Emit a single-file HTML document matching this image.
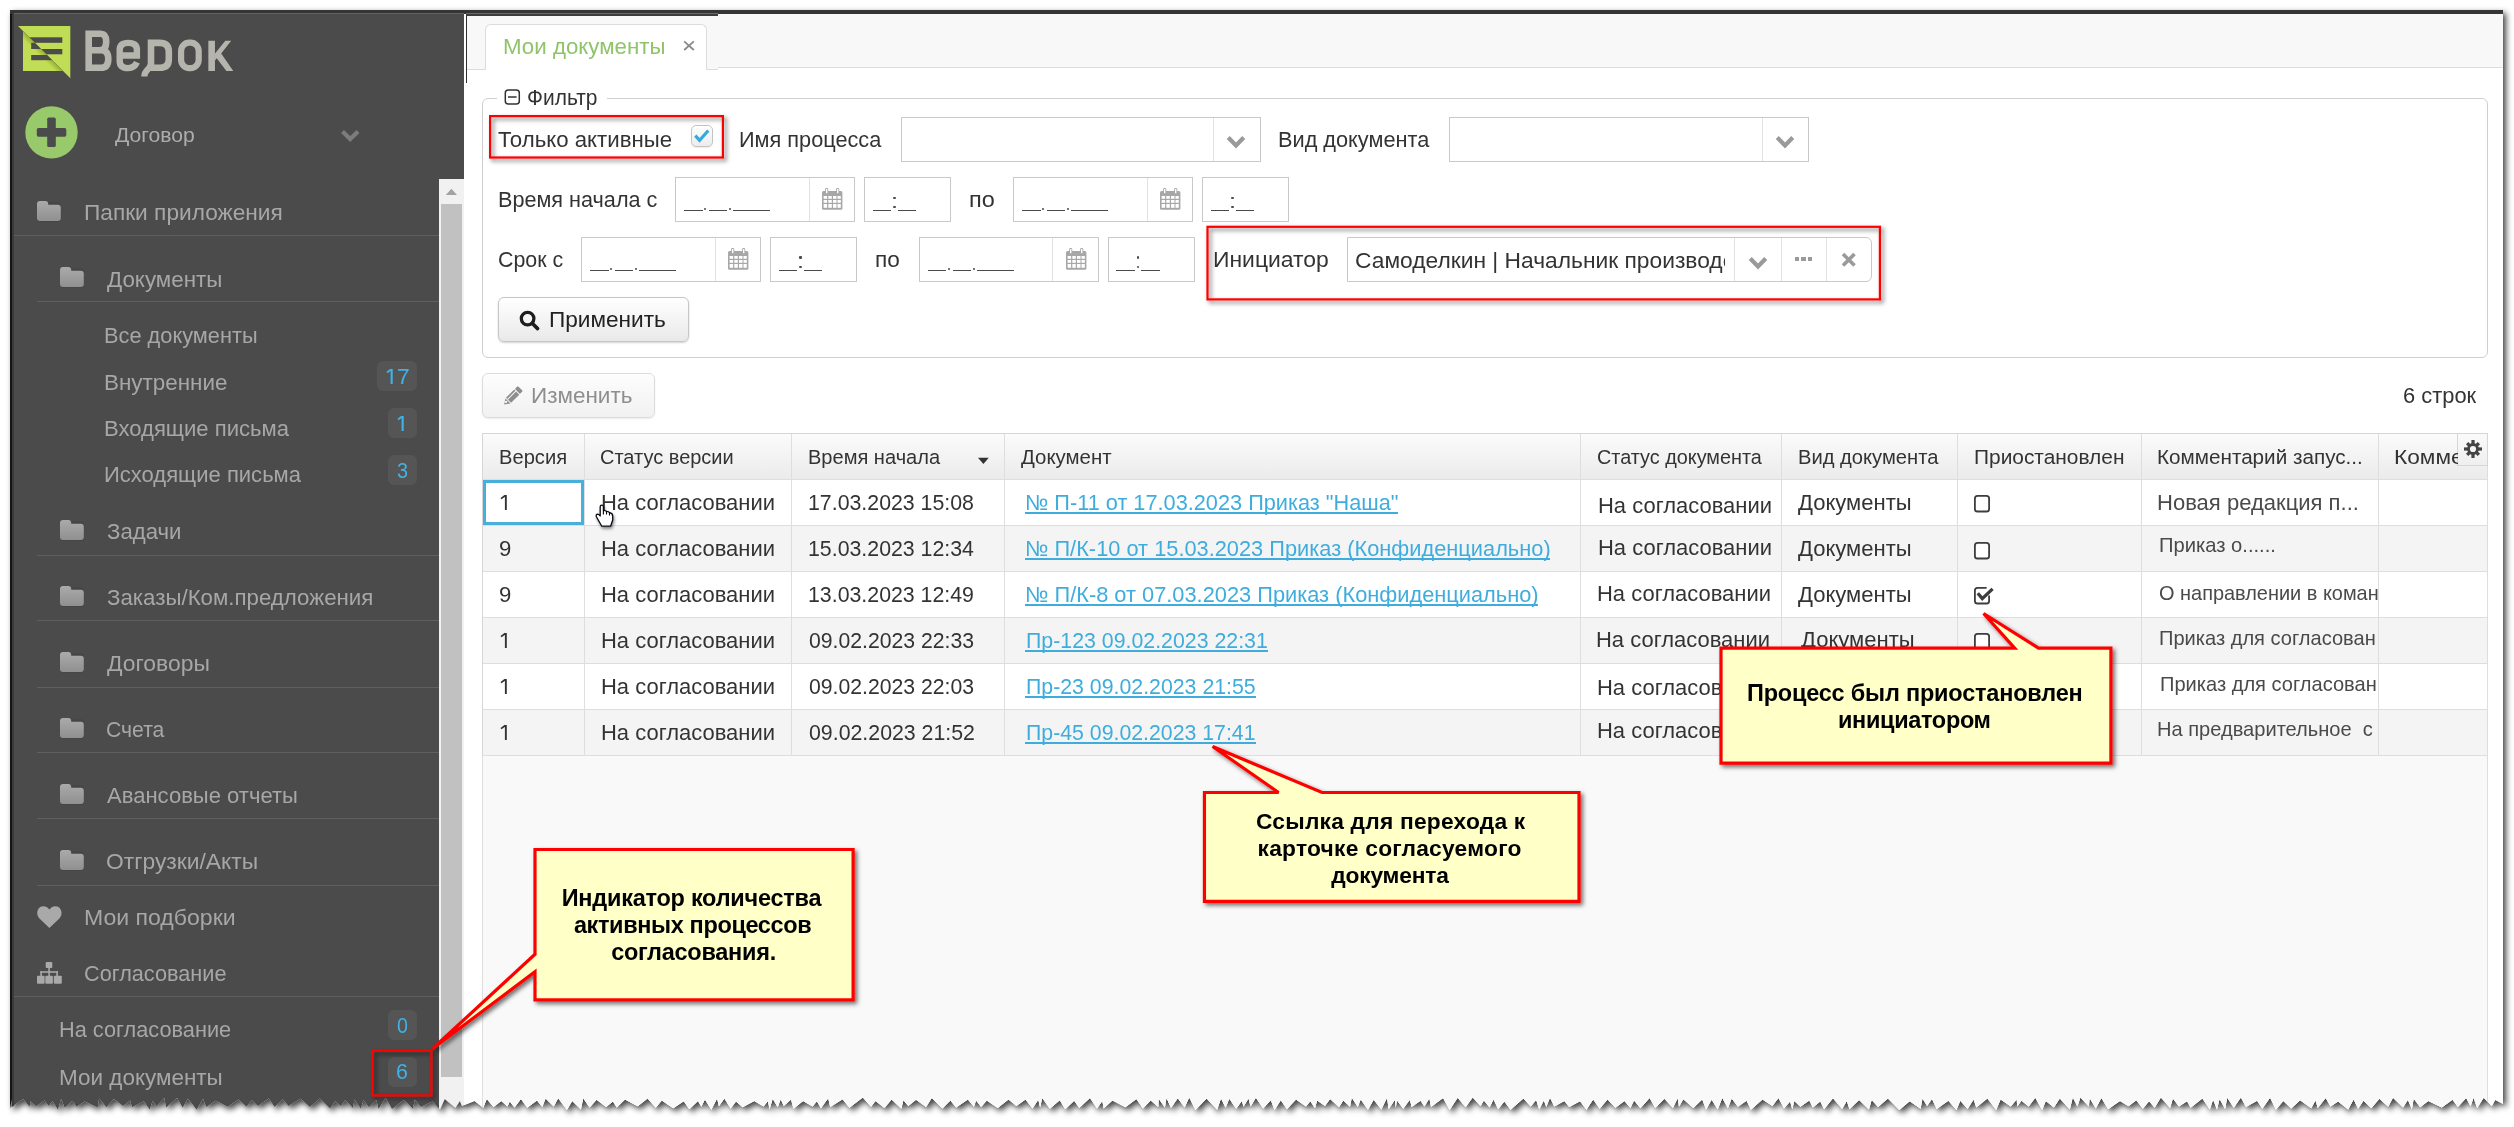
<!DOCTYPE html>
<html><head><meta charset="utf-8"><title>Мои документы</title>
<style>
html,body{margin:0;padding:0;background:#fff;}
body{width:2514px;height:1127px;position:relative;overflow:hidden;font-family:"Liberation Sans",sans-serif;}
.t{position:absolute;white-space:pre;}
#wrap{position:absolute;left:0;top:0;width:2514px;height:1127px;filter:drop-shadow(3.5px 3.5px 3px rgba(0,0,0,.75));}
#frame{position:absolute;left:0;top:0;width:2514px;height:1127px;clip-path:polygon(10.0px 10.0px,2503.0px 10.0px,2503.0px 1104.0px,2495.3px 1100.1px,2491.8px 1106.3px,2483.7px 1097.7px,2477.2px 1108.0px,2473.5px 1097.8px,2470.6px 1106.4px,2466.2px 1098.0px,2457.9px 1106.9px,2452.5px 1099.8px,2441.8px 1107.6px,2428.3px 1100.9px,2420.2px 1107.2px,2413.7px 1098.7px,2411.9px 1109.3px,2407.9px 1100.1px,2403.0px 1107.5px,2393.0px 1097.7px,2388.2px 1106.8px,2379.4px 1098.8px,2371.3px 1108.3px,2363.5px 1100.7px,2358.1px 1108.8px,2353.6px 1099.6px,2348.2px 1109.5px,2338.1px 1101.4px,2330.5px 1106.5px,2325.7px 1098.1px,2317.8px 1108.0px,2315.5px 1100.6px,2311.2px 1108.3px,2300.1px 1100.3px,2291.2px 1108.4px,2283.3px 1100.9px,2275.9px 1109.8px,2270.1px 1097.7px,2262.3px 1108.8px,2257.1px 1100.8px,2246.0px 1107.1px,2240.9px 1097.6px,2233.8px 1107.8px,2227.2px 1097.7px,2225.1px 1109.1px,2219.6px 1099.1px,2217.0px 1109.5px,2213.1px 1099.7px,2209.8px 1109.5px,2202.4px 1098.6px,2190.6px 1107.7px,2187.1px 1101.3px,2178.9px 1106.6px,2172.9px 1098.4px,2170.1px 1107.9px,2160.9px 1097.5px,2154.7px 1107.7px,2149.1px 1101.3px,2142.8px 1108.8px,2136.3px 1100.2px,2128.5px 1106.2px,2120.0px 1101.0px,2108.1px 1109.2px,2101.4px 1097.9px,2095.8px 1108.5px,2089.7px 1098.3px,2088.8px 1106.6px,2080.4px 1097.5px,2077.4px 1106.6px,2072.8px 1097.6px,2069.8px 1109.5px,2059.8px 1098.5px,2053.9px 1107.4px,2045.8px 1100.9px,2042.1px 1110.0px,2035.3px 1097.8px,2028.7px 1106.4px,2021.5px 1100.8px,2017.2px 1106.6px,2016.7px 1099.6px,2010.8px 1106.6px,2000.6px 1099.6px,1996.1px 1109.9px,1987.4px 1098.5px,1976.3px 1107.5px,1973.6px 1099.6px,1967.6px 1109.1px,1960.3px 1100.7px,1956.4px 1109.9px,1948.4px 1100.8px,1936.7px 1109.0px,1932.0px 1098.9px,1927.1px 1106.1px,1922.5px 1098.5px,1920.6px 1108.8px,1909.7px 1101.2px,1899.3px 1110.0px,1887.9px 1098.4px,1878.1px 1106.9px,1871.7px 1100.0px,1868.9px 1109.6px,1859.1px 1100.1px,1849.5px 1109.2px,1846.8px 1101.1px,1842.1px 1109.1px,1833.0px 1098.2px,1824.1px 1109.2px,1820.3px 1101.4px,1812.8px 1107.6px,1809.3px 1100.4px,1800.4px 1106.7px,1794.3px 1101.1px,1792.3px 1109.2px,1790.1px 1101.4px,1784.0px 1108.6px,1778.5px 1098.0px,1772.4px 1106.1px,1762.5px 1099.6px,1750.9px 1109.7px,1746.6px 1100.8px,1737.9px 1106.8px,1731.7px 1098.5px,1727.9px 1108.3px,1722.3px 1098.0px,1717.7px 1109.6px,1711.7px 1099.8px,1706.1px 1109.6px,1702.2px 1099.5px,1693.3px 1108.1px,1683.3px 1099.3px,1679.0px 1106.7px,1677.7px 1098.2px,1672.9px 1107.9px,1664.4px 1098.8px,1655.3px 1108.1px,1649.6px 1097.9px,1640.4px 1108.2px,1634.1px 1100.6px,1630.4px 1108.0px,1624.5px 1101.1px,1615.4px 1107.8px,1607.6px 1099.5px,1599.6px 1108.8px,1593.2px 1099.4px,1586.4px 1109.8px,1580.1px 1101.3px,1569.2px 1107.0px,1564.4px 1100.9px,1554.3px 1106.5px,1550.0px 1097.8px,1546.3px 1107.0px,1543.8px 1100.6px,1539.2px 1109.6px,1536.2px 1100.1px,1530.7px 1106.6px,1523.4px 1098.4px,1510.6px 1109.8px,1504.3px 1101.5px,1498.2px 1109.3px,1493.5px 1099.6px,1489.6px 1107.4px,1483.9px 1100.4px,1480.5px 1106.1px,1472.7px 1097.6px,1465.6px 1107.3px,1457.7px 1097.8px,1449.6px 1109.9px,1443.1px 1097.9px,1431.0px 1107.1px,1429.4px 1098.6px,1424.4px 1106.5px,1420.5px 1100.8px,1411.6px 1107.0px,1409.9px 1099.8px,1403.2px 1108.8px,1396.9px 1100.3px,1395.8px 1107.7px,1394.8px 1100.0px,1388.6px 1109.2px,1387.1px 1097.8px,1381.3px 1109.5px,1373.7px 1099.7px,1368.0px 1109.7px,1360.7px 1099.6px,1357.8px 1107.0px,1351.8px 1097.7px,1350.0px 1106.8px,1343.3px 1100.5px,1339.0px 1107.2px,1330.1px 1098.9px,1325.0px 1106.1px,1317.1px 1100.4px,1315.0px 1108.2px,1310.3px 1101.2px,1306.0px 1106.4px,1296.0px 1099.5px,1286.9px 1109.3px,1280.8px 1100.3px,1274.6px 1109.9px,1270.8px 1100.3px,1263.1px 1108.5px,1255.9px 1097.7px,1250.6px 1106.5px,1248.5px 1098.5px,1243.5px 1106.7px,1241.9px 1101.0px,1236.1px 1108.7px,1229.3px 1098.7px,1225.6px 1107.8px,1221.0px 1098.6px,1217.1px 1109.8px,1206.6px 1098.5px,1195.5px 1109.9px,1189.2px 1097.5px,1184.6px 1107.5px,1177.8px 1098.3px,1171.0px 1108.0px,1166.5px 1097.9px,1164.9px 1107.6px,1158.7px 1098.7px,1158.3px 1106.9px,1150.7px 1100.5px,1142.9px 1108.6px,1136.4px 1099.1px,1125.4px 1107.3px,1112.4px 1100.4px,1103.7px 1108.6px,1102.3px 1101.1px,1097.0px 1108.5px,1090.0px 1098.1px,1079.2px 1108.1px,1074.2px 1100.7px,1065.2px 1109.3px,1059.8px 1100.2px,1049.8px 1108.8px,1042.2px 1098.0px,1040.1px 1107.4px,1038.3px 1099.7px,1032.5px 1108.5px,1025.5px 1099.5px,1016.4px 1106.0px,1008.5px 1099.5px,997.7px 1108.1px,986.8px 1100.4px,981.1px 1107.0px,976.1px 1100.4px,973.9px 1106.8px,967.9px 1099.5px,956.1px 1107.5px,950.4px 1100.6px,942.4px 1108.5px,931.8px 1098.1px,926.1px 1107.0px,916.0px 1099.8px,908.3px 1106.0px,903.4px 1100.2px,901.3px 1108.8px,891.6px 1099.6px,884.5px 1107.9px,875.5px 1101.1px,871.0px 1106.8px,862.8px 1097.6px,849.4px 1107.8px,842.6px 1099.3px,830.2px 1107.1px,828.2px 1098.3px,820.9px 1108.3px,816.9px 1101.3px,812.6px 1106.5px,803.1px 1101.0px,793.5px 1108.8px,791.0px 1099.4px,783.8px 1106.1px,780.7px 1099.3px,777.7px 1107.2px,772.7px 1098.8px,769.5px 1109.4px,768.0px 1100.9px,763.5px 1106.5px,754.3px 1101.1px,742.6px 1107.2px,736.0px 1101.5px,730.7px 1108.4px,724.4px 1098.6px,718.9px 1106.2px,717.1px 1098.6px,711.3px 1109.7px,704.9px 1099.5px,701.3px 1106.8px,698.0px 1101.0px,689.3px 1109.2px,683.8px 1101.3px,673.2px 1108.2px,661.8px 1100.4px,655.7px 1107.8px,647.6px 1098.6px,637.7px 1106.2px,625.0px 1099.4px,616.8px 1107.4px,612.9px 1101.4px,606.1px 1107.0px,596.6px 1099.7px,589.6px 1107.6px,583.2px 1098.3px,580.9px 1109.6px,572.2px 1101.1px,566.9px 1110.0px,558.2px 1098.3px,553.7px 1106.4px,545.6px 1098.5px,542.3px 1107.0px,537.0px 1100.5px,527.2px 1107.7px,521.0px 1099.0px,514.5px 1107.4px,509.7px 1101.4px,507.5px 1106.5px,501.3px 1101.0px,493.5px 1106.9px,486.8px 1099.1px,483.2px 1107.8px,474.6px 1101.0px,461.9px 1106.1px,459.9px 1101.1px,455.4px 1107.9px,444.7px 1099.1px,440.0px 1109.7px,432.5px 1101.4px,420.8px 1107.0px,414.8px 1099.6px,413.0px 1108.7px,403.8px 1100.1px,392.0px 1109.1px,385.6px 1097.7px,378.6px 1109.1px,376.3px 1100.1px,368.9px 1107.2px,363.4px 1100.0px,360.9px 1108.8px,354.4px 1099.6px,353.1px 1108.3px,345.3px 1099.9px,340.9px 1106.0px,335.2px 1101.3px,330.1px 1108.6px,319.8px 1098.4px,309.9px 1107.0px,300.5px 1098.7px,288.5px 1106.1px,282.6px 1099.2px,274.6px 1107.0px,268.8px 1098.4px,257.9px 1106.1px,251.7px 1100.2px,246.5px 1106.8px,238.5px 1099.5px,227.7px 1106.8px,215.8px 1100.8px,206.2px 1106.9px,203.0px 1098.7px,196.7px 1109.8px,187.8px 1098.4px,182.7px 1107.7px,177.1px 1098.1px,166.1px 1107.6px,164.2px 1098.1px,156.7px 1106.2px,152.6px 1101.1px,149.7px 1109.5px,143.8px 1101.2px,132.0px 1107.3px,130.1px 1100.5px,123.0px 1106.1px,114.0px 1099.0px,106.4px 1107.3px,99.1px 1098.6px,97.7px 1107.4px,84.8px 1101.4px,76.4px 1106.8px,72.5px 1100.8px,64.7px 1107.7px,61.1px 1099.0px,57.9px 1109.7px,52.5px 1101.1px,48.8px 1106.1px,44.4px 1100.6px,36.2px 1106.2px,30.3px 1101.2px,29.7px 1107.0px,23.1px 1098.9px,11.7px 1107.1px,11.6px 1098.5px,10.0px 1108.9px,10.0px 1107.0px);}
</style></head><body>
<div id="wrap"><div id="frame">
<div style="position:absolute;left:10px;top:10px;width:2493px;height:1110px;background:#fff"></div>
<div style="position:absolute;left:10px;top:10px;width:454px;height:1110px;background:#4b4b4b"></div>
<div style="position:absolute;left:10px;top:10px;width:2px;height:1110px;background:#151515"></div>
<div style="position:absolute;left:12px;top:10px;width:2px;height:1110px;background:#3a3a3a"></div>
<div style="position:absolute;left:10px;top:10px;width:2493px;height:4px;background:#353535"></div>
<div style="position:absolute;left:14px;top:13px;width:450px;height:1px;background:#626262"></div>
<svg style="position:absolute;left:0;top:0" width="90" height="90" viewBox="0 0 90 90">
<defs>
 <clipPath id="lu"><polygon points="18,26 70.3,26 70.3,78.3"/></clipPath>
 <clipPath id="ll"><polygon points="23,31 63,71 23,71"/></clipPath>
 <linearGradient id="lg" x1="0" y1="1" x2="1" y2="0" gradientUnits="objectBoundingBox">
   <stop offset="0" stop-color="#c1dc55"/><stop offset="0.40" stop-color="#c1dc55"/><stop offset="0.5" stop-color="#98b032"/>
 </linearGradient>
</defs>
<polygon points="18,26 70.3,26 70.3,78.3" fill="#c1dc55"/>
<g clip-path="url(#lu)" fill="#4b4b4b"><rect x="29" y="37.3" width="33.3" height="5.5"/><rect x="31" y="49" width="31.3" height="5.3"/></g>
<polygon points="23,31 63,71 23,71" fill="url(#lg)"/>
<g clip-path="url(#ll)" fill="#4b4b4b"><rect x="31.2" y="42.8" width="31" height="6.2"/><rect x="31.2" y="55" width="31" height="5.2"/></g>
</svg>
<svg style="position:absolute;left:80px;top:24px" width="160" height="58" viewBox="80 24 160 58">
<g fill="none" stroke="#b5b5ad" stroke-width="6.6">
<path d="M88.7,30.4 V71.1 M88.7,33.7 H100.5 Q106.2,33.7 106.2,41.5 Q106.2,50.3 99.5,50.3 H88.7 M99,50.3 H101 Q108.3,50.3 108.3,59 Q108.3,67.8 101,67.8 H88.7"/>
<path d="M119.7,55.5 H136.9 V50 Q136.9,42.9 128.3,42.9 Q119.7,42.9 119.7,50 V61 Q119.7,68.1 128.3,68.1 Q134.5,68.1 136.9,62.3" stroke-width="6.4"/>
<path d="M151,39.6 V66 M151,42.9 H159.5 Q168.8,42.9 168.8,51.5 V59.5 Q168.8,67.8 159.5,67.8 H151"/>
<path d="M151,63.5 C151,69.5 144.3,69 144.3,76.6" stroke-width="6.2"/>
<rect x="181.1" y="42.7" width="17.6" height="25.5" rx="8" ry="8.5" stroke-width="6.2"/>
<path d="M211.65,40.7 V71.1"/>
</g>
<polygon points="215,53.6 225.3,40.7 231.2,40.7 221.2,53.5 233.3,71.1 226.4,71.1 216.7,58.3 215,60.5" fill="#b5b5ad"/>
</svg>
<svg style="position:absolute;left:20px;top:100px" width="65" height="65" viewBox="20 100 65 65">
<circle cx="51.5" cy="132.4" r="26.2" fill="#98c96b"/>
<rect x="36.8" y="128.1" width="29.5" height="8.6" rx="1.6" fill="#4b4b4b"/>
<rect x="47.2" y="117.6" width="8.6" height="29.5" rx="1.6" fill="#4b4b4b"/>
</svg>
<svg style="position:absolute;left:330px;top:120px" width="40" height="30" viewBox="330 120 40 30">
<polyline points="342.5,131.5 350.2,139 358,131.5" fill="none" stroke="#7c7c7c" stroke-width="4.2"/></svg>
<div style="position:absolute;left:14px;top:235px;width:424.5px;height:1px;background:#5f5f5f"></div>
<div style="position:absolute;left:37px;top:301px;width:401.5px;height:1px;background:#5f5f5f"></div>
<div style="position:absolute;left:37px;top:554.5px;width:401.5px;height:1.0px;background:#5f5f5f"></div>
<div style="position:absolute;left:37px;top:620.3px;width:401.5px;height:1.0px;background:#5f5f5f"></div>
<div style="position:absolute;left:37px;top:686.5px;width:401.5px;height:1.0px;background:#5f5f5f"></div>
<div style="position:absolute;left:37px;top:752px;width:401.5px;height:1px;background:#5f5f5f"></div>
<div style="position:absolute;left:37px;top:818.4px;width:401.5px;height:1.0px;background:#5f5f5f"></div>
<div style="position:absolute;left:37px;top:884.6px;width:401.5px;height:1.0px;background:#5f5f5f"></div>
<div style="position:absolute;left:14px;top:996px;width:424.5px;height:1px;background:#5f5f5f"></div>
<svg style="position:absolute;left:37.1px;top:201px;overflow:visible" width="24" height="21" viewBox="0 0 24 21">
<defs><linearGradient id="fg37_201" x1="0" y1="0" x2="0" y2="1"><stop offset="0" stop-color="#aaaaaa"/><stop offset="1" stop-color="#909090"/></linearGradient></defs>
<rect x="0.3" y="1" width="23.5" height="20" rx="3" fill="#3e3e3e" opacity="0.35"/>
<path d="M0,3 Q0,0 3,0 L8.3,0 Q11.2,0 11.2,3 L11.2,3.8 L20.8,3.8 Q23.8,3.8 23.8,6.8 L23.8,17 Q23.8,20 20.8,20 L3,20 Q0,20 0,17 Z" fill="url(#fg37_201)"/>
</svg>
<svg style="position:absolute;left:59.8px;top:267px;overflow:visible" width="24" height="21" viewBox="0 0 24 21">
<defs><linearGradient id="fg59_267" x1="0" y1="0" x2="0" y2="1"><stop offset="0" stop-color="#aaaaaa"/><stop offset="1" stop-color="#909090"/></linearGradient></defs>
<rect x="0.3" y="1" width="23.5" height="20" rx="3" fill="#3e3e3e" opacity="0.35"/>
<path d="M0,3 Q0,0 3,0 L8.3,0 Q11.2,0 11.2,3 L11.2,3.8 L20.8,3.8 Q23.8,3.8 23.8,6.8 L23.8,17 Q23.8,20 20.8,20 L3,20 Q0,20 0,17 Z" fill="url(#fg59_267)"/>
</svg>
<svg style="position:absolute;left:59.8px;top:520px;overflow:visible" width="24" height="21" viewBox="0 0 24 21">
<defs><linearGradient id="fg59_520" x1="0" y1="0" x2="0" y2="1"><stop offset="0" stop-color="#aaaaaa"/><stop offset="1" stop-color="#909090"/></linearGradient></defs>
<rect x="0.3" y="1" width="23.5" height="20" rx="3" fill="#3e3e3e" opacity="0.35"/>
<path d="M0,3 Q0,0 3,0 L8.3,0 Q11.2,0 11.2,3 L11.2,3.8 L20.8,3.8 Q23.8,3.8 23.8,6.8 L23.8,17 Q23.8,20 20.8,20 L3,20 Q0,20 0,17 Z" fill="url(#fg59_520)"/>
</svg>
<svg style="position:absolute;left:59.8px;top:586px;overflow:visible" width="24" height="21" viewBox="0 0 24 21">
<defs><linearGradient id="fg59_586" x1="0" y1="0" x2="0" y2="1"><stop offset="0" stop-color="#aaaaaa"/><stop offset="1" stop-color="#909090"/></linearGradient></defs>
<rect x="0.3" y="1" width="23.5" height="20" rx="3" fill="#3e3e3e" opacity="0.35"/>
<path d="M0,3 Q0,0 3,0 L8.3,0 Q11.2,0 11.2,3 L11.2,3.8 L20.8,3.8 Q23.8,3.8 23.8,6.8 L23.8,17 Q23.8,20 20.8,20 L3,20 Q0,20 0,17 Z" fill="url(#fg59_586)"/>
</svg>
<svg style="position:absolute;left:59.8px;top:652px;overflow:visible" width="24" height="21" viewBox="0 0 24 21">
<defs><linearGradient id="fg59_652" x1="0" y1="0" x2="0" y2="1"><stop offset="0" stop-color="#aaaaaa"/><stop offset="1" stop-color="#909090"/></linearGradient></defs>
<rect x="0.3" y="1" width="23.5" height="20" rx="3" fill="#3e3e3e" opacity="0.35"/>
<path d="M0,3 Q0,0 3,0 L8.3,0 Q11.2,0 11.2,3 L11.2,3.8 L20.8,3.8 Q23.8,3.8 23.8,6.8 L23.8,17 Q23.8,20 20.8,20 L3,20 Q0,20 0,17 Z" fill="url(#fg59_652)"/>
</svg>
<svg style="position:absolute;left:59.8px;top:718px;overflow:visible" width="24" height="21" viewBox="0 0 24 21">
<defs><linearGradient id="fg59_718" x1="0" y1="0" x2="0" y2="1"><stop offset="0" stop-color="#aaaaaa"/><stop offset="1" stop-color="#909090"/></linearGradient></defs>
<rect x="0.3" y="1" width="23.5" height="20" rx="3" fill="#3e3e3e" opacity="0.35"/>
<path d="M0,3 Q0,0 3,0 L8.3,0 Q11.2,0 11.2,3 L11.2,3.8 L20.8,3.8 Q23.8,3.8 23.8,6.8 L23.8,17 Q23.8,20 20.8,20 L3,20 Q0,20 0,17 Z" fill="url(#fg59_718)"/>
</svg>
<svg style="position:absolute;left:59.8px;top:784px;overflow:visible" width="24" height="21" viewBox="0 0 24 21">
<defs><linearGradient id="fg59_784" x1="0" y1="0" x2="0" y2="1"><stop offset="0" stop-color="#aaaaaa"/><stop offset="1" stop-color="#909090"/></linearGradient></defs>
<rect x="0.3" y="1" width="23.5" height="20" rx="3" fill="#3e3e3e" opacity="0.35"/>
<path d="M0,3 Q0,0 3,0 L8.3,0 Q11.2,0 11.2,3 L11.2,3.8 L20.8,3.8 Q23.8,3.8 23.8,6.8 L23.8,17 Q23.8,20 20.8,20 L3,20 Q0,20 0,17 Z" fill="url(#fg59_784)"/>
</svg>
<svg style="position:absolute;left:59.8px;top:850px;overflow:visible" width="24" height="21" viewBox="0 0 24 21">
<defs><linearGradient id="fg59_850" x1="0" y1="0" x2="0" y2="1"><stop offset="0" stop-color="#aaaaaa"/><stop offset="1" stop-color="#909090"/></linearGradient></defs>
<rect x="0.3" y="1" width="23.5" height="20" rx="3" fill="#3e3e3e" opacity="0.35"/>
<path d="M0,3 Q0,0 3,0 L8.3,0 Q11.2,0 11.2,3 L11.2,3.8 L20.8,3.8 Q23.8,3.8 23.8,6.8 L23.8,17 Q23.8,20 20.8,20 L3,20 Q0,20 0,17 Z" fill="url(#fg59_850)"/>
</svg>
<svg style="position:absolute;left:36px;top:904px" width="28" height="26" viewBox="36 904 28 26">
<path d="M49.4,928 L39.2,918.2 C35.5,914.3 37.2,906.2 43.3,906.2 C46.3,906.2 48.3,908 49.4,909.6 C50.5,908 52.5,906.2 55.5,906.2 C61.6,906.2 63.3,914.3 59.6,918.2 Z" fill="#a9a9a9"/></svg>
<svg style="position:absolute;left:36px;top:960px" width="28" height="26" viewBox="36 960 28 26" fill="#a9a9a9">
<rect x="45.7" y="962" width="6.6" height="6" rx="1"/>
<rect x="48.3" y="967" width="1.6" height="5"/>
<rect x="40.3" y="971.2" width="17.6" height="1.6"/>
<rect x="40.3" y="971.2" width="1.6" height="5"/><rect x="48.3" y="971.2" width="1.6" height="5"/><rect x="56.3" y="971.2" width="1.6" height="5"/>
<rect x="37" y="975.8" width="7.6" height="8" rx="1"/><rect x="45.3" y="975.8" width="7.6" height="8" rx="1"/><rect x="53.8" y="975.8" width="8" height="8" rx="1"/>
</svg>
<div style="position:absolute;left:377px;top:361px;width:39.80000000000001px;height:30px;background:#555555;border-radius:6px"></div>
<div style="position:absolute;left:388px;top:408.4px;width:28.80000000000001px;height:29.30000000000001px;background:#555555;border-radius:6px"></div>
<div style="position:absolute;left:388px;top:455px;width:28.80000000000001px;height:29.5px;background:#555555;border-radius:6px"></div>
<div style="position:absolute;left:388px;top:1010px;width:28.80000000000001px;height:29.59999999999991px;background:#555555;border-radius:6px"></div>
<div style="position:absolute;left:388px;top:1057.4px;width:28.80000000000001px;height:29.199999999999818px;background:#555555;border-radius:6px"></div>
<svg style="position:absolute;left:385.0px;top:368px;overflow:visible" width="9.7" height="17" viewBox="385.0 368 9.7 17"><rect x="390.6" y="369" width="2.1" height="15" fill="#3fb3e6"/><line x1="391.0" y1="369.5" x2="387.0" y2="372.6" stroke="#3fb3e6" stroke-width="1.8900000000000001"/></svg>
<svg style="position:absolute;left:396.4px;top:415px;overflow:visible" width="9.7" height="17" viewBox="396.4 415 9.7 17"><rect x="402.0" y="416" width="2.1" height="15" fill="#3fb3e6"/><line x1="402.4" y1="416.5" x2="398.4" y2="419.6" stroke="#3fb3e6" stroke-width="1.8900000000000001"/></svg>
<div style="position:absolute;left:438.5px;top:178.8px;width:25.5px;height:941.2px;background:#f1f1f1"></div>
<svg style="position:absolute;left:440px;top:180px" width="24" height="20" viewBox="440 180 24 20"><polygon points="445.8,195 451.4,188.7 457,195" fill="#a3a3a3"/></svg>
<div style="position:absolute;left:441px;top:204px;width:21px;height:872.8px;background:#c1c1c1"></div>
<div style="position:absolute;left:464px;top:14px;width:2039px;height:1106px;background:#fff"></div>
<div style="position:absolute;left:467px;top:14px;width:2036px;height:53.3px;background:#f8f8f8;border-bottom:1px solid #dcdcdc"></div>
<div style="position:absolute;left:467px;top:14px;width:251px;height:54.8px;background:#f8f8f8;border-bottom:1px solid #dcdcdc"></div>
<div style="position:absolute;left:466px;top:14px;width:1.3000000000000114px;height:68.5px;background:#2e2e2e"></div>
<div style="position:absolute;left:466px;top:14px;width:252px;height:1.5999999999999996px;background:#3c3c3c"></div>
<div style="position:absolute;left:466px;top:13px;width:252px;height:1px;background:#6a6a6a"></div>
<div style="position:absolute;left:484.5px;top:24.3px;width:222.79999999999995px;height:45.7px;background:#fff;border:1px solid #dcdcdc;border-bottom:none;border-radius:6px 6px 0 0;box-sizing:border-box"></div>
<svg style="position:absolute;left:680px;top:37px" width="18" height="17" viewBox="680 37 18 17"><path d="M684.2,41.3 L693.8,50 M693.8,41.3 L684.2,50" stroke="#8a8a8a" stroke-width="1.8"/></svg>
<div style="position:absolute;left:482px;top:98px;width:2006px;height:260px;border:1px solid #cfcfcf;border-radius:6px;box-sizing:border-box"></div>
<div style="position:absolute;left:497px;top:96px;width:110px;height:5px;background:#fff"></div>
<svg style="position:absolute;left:500px;top:86px" width="24" height="22" viewBox="500 86 24 22">
<rect x="505.3" y="89.9" width="14" height="14.2" rx="3" fill="none" stroke="#333" stroke-width="1.5"/>
<line x1="508" y1="97" x2="516.6" y2="97" stroke="#333" stroke-width="1.6"/></svg>
<div style="position:absolute;left:691px;top:125.4px;width:21.700000000000045px;height:21.900000000000006px;border:1px solid #c4c4c4;border-radius:5px;box-sizing:border-box;background:linear-gradient(#ffffff,#ececec);box-shadow:0 1px 1px rgba(0,0,0,.08)"></div>
<svg style="position:absolute;left:690px;top:124px" width="24" height="24" viewBox="690 124 24 24"><polyline points="695.3,135.6 699.6,140.3 708.3,130.5" fill="none" stroke="#36a9dd" stroke-width="3.2"/></svg>
<div style="position:absolute;left:901px;top:117px;width:360px;height:45px;border:1px solid #c9c9c9;box-sizing:border-box;background:#fff"></div>
<div style="position:absolute;left:1213px;top:118px;width:1px;height:43px;background:#e2e2e2"></div>
<svg style="position:absolute;left:1221.2px;top:130.2px" width="30" height="24" viewBox="1221.2 130.2 30 24"><polyline points="1228.45,137.7 1236.2,145.7 1243.95,137.7" fill="none" stroke="#9a9a9a" stroke-width="4.2"/></svg>
<div style="position:absolute;left:1449px;top:117px;width:360px;height:45px;border:1px solid #c9c9c9;box-sizing:border-box;background:#fff"></div>
<div style="position:absolute;left:1762px;top:118px;width:1px;height:43px;background:#e2e2e2"></div>
<svg style="position:absolute;left:1769.5px;top:130.2px" width="30" height="24" viewBox="1769.5 130.2 30 24"><polyline points="1776.75,137.7 1784.5,145.7 1792.25,137.7" fill="none" stroke="#9a9a9a" stroke-width="4.2"/></svg>
<div style="position:absolute;left:675px;top:177px;width:180px;height:45px;border:1px solid #c9c9c9;box-sizing:border-box;background:#fff"></div>
<div style="position:absolute;left:809px;top:178px;width:1px;height:43px;background:#e2e2e2"></div>
<svg style="position:absolute;left:821.6px;top:188px" width="21" height="22" viewBox="0 0 21 22">
<rect x="0" y="3" width="20.4" height="18.7" rx="1.5" fill="#a7a7a7"/>
<rect x="3.2" y="0" width="3" height="6" rx="1.2" fill="#a7a7a7"/><rect x="14.2" y="0" width="3" height="6" rx="1.2" fill="#a7a7a7"/>
<rect x="4" y="1" width="1.4" height="4.2" fill="#fff"/><rect x="15" y="1" width="1.4" height="4.2" fill="#fff"/>
<g fill="#fff">
<rect x="1.6" y="8" width="3.5" height="2.8"/><rect x="6.3" y="8" width="3.5" height="2.8"/><rect x="11" y="8" width="3.5" height="2.8"/><rect x="15.5" y="8" width="3.3" height="2.8"/>
<rect x="1.6" y="12" width="3.5" height="2.8"/><rect x="6.3" y="12" width="3.5" height="2.8"/><rect x="11" y="12" width="3.5" height="2.8"/><rect x="15.5" y="12" width="3.3" height="2.8"/>
<rect x="1.6" y="16" width="3.5" height="3.8"/><rect x="6.3" y="16" width="3.5" height="3.8"/><rect x="11" y="16" width="3.5" height="3.8"/><rect x="15.5" y="16" width="3.3" height="3.8"/>
</g></svg>
<div style="position:absolute;left:684px;top:209.5px;width:18.700000000000045px;height:1.5px;background:#4a4a4a"></div><div style="position:absolute;left:708.9px;top:209.5px;width:18.600000000000023px;height:1.5px;background:#4a4a4a"></div><div style="position:absolute;left:733.4px;top:209.5px;width:37.10000000000002px;height:1.5px;background:#4a4a4a"></div><div style="position:absolute;left:704.3px;top:208.10000000000002px;width:2.2000000000000455px;height:2.1999999999999886px;background:#4a4a4a;border-radius:1px"></div><div style="position:absolute;left:729.2px;top:208.10000000000002px;width:2.2000000000000455px;height:2.1999999999999886px;background:#4a4a4a;border-radius:1px"></div>
<div style="position:absolute;left:864px;top:177px;width:87px;height:45px;border:1px solid #c9c9c9;box-sizing:border-box;background:#fff"></div>
<div style="position:absolute;left:872.6px;top:209.5px;width:18.5px;height:1.5px;background:#4a4a4a"></div><div style="position:absolute;left:897.6px;top:209.5px;width:18.399999999999977px;height:1.5px;background:#4a4a4a"></div><div style="position:absolute;left:893.4px;top:196.70000000000002px;width:2.400000000000091px;height:2.4000000000000057px;background:#4a4a4a;border-radius:1px"></div><div style="position:absolute;left:893.4px;top:206.0px;width:2.400000000000091px;height:2.4000000000000057px;background:#4a4a4a;border-radius:1px"></div>
<div style="position:absolute;left:1013px;top:177px;width:180px;height:45px;border:1px solid #c9c9c9;box-sizing:border-box;background:#fff"></div>
<div style="position:absolute;left:1147px;top:178px;width:1px;height:43px;background:#e2e2e2"></div>
<svg style="position:absolute;left:1159.6px;top:188px" width="21" height="22" viewBox="0 0 21 22">
<rect x="0" y="3" width="20.4" height="18.7" rx="1.5" fill="#a7a7a7"/>
<rect x="3.2" y="0" width="3" height="6" rx="1.2" fill="#a7a7a7"/><rect x="14.2" y="0" width="3" height="6" rx="1.2" fill="#a7a7a7"/>
<rect x="4" y="1" width="1.4" height="4.2" fill="#fff"/><rect x="15" y="1" width="1.4" height="4.2" fill="#fff"/>
<g fill="#fff">
<rect x="1.6" y="8" width="3.5" height="2.8"/><rect x="6.3" y="8" width="3.5" height="2.8"/><rect x="11" y="8" width="3.5" height="2.8"/><rect x="15.5" y="8" width="3.3" height="2.8"/>
<rect x="1.6" y="12" width="3.5" height="2.8"/><rect x="6.3" y="12" width="3.5" height="2.8"/><rect x="11" y="12" width="3.5" height="2.8"/><rect x="15.5" y="12" width="3.3" height="2.8"/>
<rect x="1.6" y="16" width="3.5" height="3.8"/><rect x="6.3" y="16" width="3.5" height="3.8"/><rect x="11" y="16" width="3.5" height="3.8"/><rect x="15.5" y="16" width="3.3" height="3.8"/>
</g></svg>
<div style="position:absolute;left:1022px;top:209.5px;width:18.700000000000045px;height:1.5px;background:#4a4a4a"></div><div style="position:absolute;left:1046.9px;top:209.5px;width:18.59999999999991px;height:1.5px;background:#4a4a4a"></div><div style="position:absolute;left:1071.4px;top:209.5px;width:37.09999999999991px;height:1.5px;background:#4a4a4a"></div><div style="position:absolute;left:1042.3px;top:208.10000000000002px;width:2.2000000000000455px;height:2.1999999999999886px;background:#4a4a4a;border-radius:1px"></div><div style="position:absolute;left:1067.2px;top:208.10000000000002px;width:2.2000000000000455px;height:2.1999999999999886px;background:#4a4a4a;border-radius:1px"></div>
<div style="position:absolute;left:1202px;top:177px;width:87px;height:45px;border:1px solid #c9c9c9;box-sizing:border-box;background:#fff"></div>
<div style="position:absolute;left:1210.6px;top:209.5px;width:18.5px;height:1.5px;background:#4a4a4a"></div><div style="position:absolute;left:1235.6px;top:209.5px;width:18.40000000000009px;height:1.5px;background:#4a4a4a"></div><div style="position:absolute;left:1231.3999999999999px;top:196.70000000000002px;width:2.400000000000091px;height:2.4000000000000057px;background:#4a4a4a;border-radius:1px"></div><div style="position:absolute;left:1231.3999999999999px;top:206.0px;width:2.400000000000091px;height:2.4000000000000057px;background:#4a4a4a;border-radius:1px"></div>
<div style="position:absolute;left:581px;top:237px;width:180px;height:45px;border:1px solid #c9c9c9;box-sizing:border-box;background:#fff"></div>
<div style="position:absolute;left:715px;top:238px;width:1px;height:43px;background:#e2e2e2"></div>
<svg style="position:absolute;left:727.5px;top:248px" width="21" height="22" viewBox="0 0 21 22">
<rect x="0" y="3" width="20.4" height="18.7" rx="1.5" fill="#a7a7a7"/>
<rect x="3.2" y="0" width="3" height="6" rx="1.2" fill="#a7a7a7"/><rect x="14.2" y="0" width="3" height="6" rx="1.2" fill="#a7a7a7"/>
<rect x="4" y="1" width="1.4" height="4.2" fill="#fff"/><rect x="15" y="1" width="1.4" height="4.2" fill="#fff"/>
<g fill="#fff">
<rect x="1.6" y="8" width="3.5" height="2.8"/><rect x="6.3" y="8" width="3.5" height="2.8"/><rect x="11" y="8" width="3.5" height="2.8"/><rect x="15.5" y="8" width="3.3" height="2.8"/>
<rect x="1.6" y="12" width="3.5" height="2.8"/><rect x="6.3" y="12" width="3.5" height="2.8"/><rect x="11" y="12" width="3.5" height="2.8"/><rect x="15.5" y="12" width="3.3" height="2.8"/>
<rect x="1.6" y="16" width="3.5" height="3.8"/><rect x="6.3" y="16" width="3.5" height="3.8"/><rect x="11" y="16" width="3.5" height="3.8"/><rect x="15.5" y="16" width="3.3" height="3.8"/>
</g></svg>
<div style="position:absolute;left:590px;top:269.5px;width:18.700000000000045px;height:1.5px;background:#4a4a4a"></div><div style="position:absolute;left:614.9px;top:269.5px;width:18.600000000000023px;height:1.5px;background:#4a4a4a"></div><div style="position:absolute;left:639.4px;top:269.5px;width:37.10000000000002px;height:1.5px;background:#4a4a4a"></div><div style="position:absolute;left:610.3px;top:267.8px;width:2.2000000000000455px;height:2.1999999999999886px;background:#4a4a4a;border-radius:1px"></div><div style="position:absolute;left:635.2px;top:267.8px;width:2.2000000000000455px;height:2.1999999999999886px;background:#4a4a4a;border-radius:1px"></div>
<div style="position:absolute;left:770px;top:237px;width:87px;height:45px;border:1px solid #c9c9c9;box-sizing:border-box;background:#fff"></div>
<div style="position:absolute;left:778.6px;top:269.5px;width:18.5px;height:1.5px;background:#4a4a4a"></div><div style="position:absolute;left:803.6px;top:269.5px;width:18.399999999999977px;height:1.5px;background:#4a4a4a"></div><div style="position:absolute;left:799.4px;top:256.4px;width:2.400000000000091px;height:2.3999999999999773px;background:#4a4a4a;border-radius:1px"></div><div style="position:absolute;left:799.4px;top:265.7px;width:2.400000000000091px;height:2.3999999999999773px;background:#4a4a4a;border-radius:1px"></div>
<div style="position:absolute;left:919px;top:237px;width:180px;height:45px;border:1px solid #c9c9c9;box-sizing:border-box;background:#fff"></div>
<div style="position:absolute;left:1052px;top:238px;width:1px;height:43px;background:#e2e2e2"></div>
<svg style="position:absolute;left:1065.8px;top:248px" width="21" height="22" viewBox="0 0 21 22">
<rect x="0" y="3" width="20.4" height="18.7" rx="1.5" fill="#a7a7a7"/>
<rect x="3.2" y="0" width="3" height="6" rx="1.2" fill="#a7a7a7"/><rect x="14.2" y="0" width="3" height="6" rx="1.2" fill="#a7a7a7"/>
<rect x="4" y="1" width="1.4" height="4.2" fill="#fff"/><rect x="15" y="1" width="1.4" height="4.2" fill="#fff"/>
<g fill="#fff">
<rect x="1.6" y="8" width="3.5" height="2.8"/><rect x="6.3" y="8" width="3.5" height="2.8"/><rect x="11" y="8" width="3.5" height="2.8"/><rect x="15.5" y="8" width="3.3" height="2.8"/>
<rect x="1.6" y="12" width="3.5" height="2.8"/><rect x="6.3" y="12" width="3.5" height="2.8"/><rect x="11" y="12" width="3.5" height="2.8"/><rect x="15.5" y="12" width="3.3" height="2.8"/>
<rect x="1.6" y="16" width="3.5" height="3.8"/><rect x="6.3" y="16" width="3.5" height="3.8"/><rect x="11" y="16" width="3.5" height="3.8"/><rect x="15.5" y="16" width="3.3" height="3.8"/>
</g></svg>
<div style="position:absolute;left:927.7px;top:269.5px;width:18.700000000000045px;height:1.5px;background:#4a4a4a"></div><div style="position:absolute;left:952.6px;top:269.5px;width:18.600000000000023px;height:1.5px;background:#4a4a4a"></div><div style="position:absolute;left:977.1px;top:269.5px;width:37.10000000000002px;height:1.5px;background:#4a4a4a"></div><div style="position:absolute;left:948.0px;top:267.8px;width:2.2000000000000455px;height:2.1999999999999886px;background:#4a4a4a;border-radius:1px"></div><div style="position:absolute;left:972.9000000000001px;top:267.8px;width:2.2000000000000455px;height:2.1999999999999886px;background:#4a4a4a;border-radius:1px"></div>
<div style="position:absolute;left:1108px;top:237px;width:87px;height:45px;border:1px solid #c9c9c9;box-sizing:border-box;background:#fff"></div>
<div style="position:absolute;left:1116.3px;top:269.5px;width:18.5px;height:1.5px;background:#4a4a4a"></div><div style="position:absolute;left:1141.3px;top:269.5px;width:18.40000000000009px;height:1.5px;background:#4a4a4a"></div><div style="position:absolute;left:1137.1px;top:256.4px;width:2.400000000000091px;height:2.3999999999999773px;background:#4a4a4a;border-radius:1px"></div><div style="position:absolute;left:1137.1px;top:265.7px;width:2.400000000000091px;height:2.3999999999999773px;background:#4a4a4a;border-radius:1px"></div>
<div style="position:absolute;left:1347px;top:237px;width:525px;height:45px;border:1px solid #c9c9c9;border-radius:0 6px 6px 0;box-sizing:border-box;background:#fff"></div>
<div style="position:absolute;left:1734px;top:238px;width:1px;height:43px;background:#e2e2e2"></div>
<div style="position:absolute;left:1781px;top:238px;width:1px;height:43px;background:#e2e2e2"></div>
<div style="position:absolute;left:1826px;top:238px;width:1px;height:43px;background:#e2e2e2"></div>
<svg style="position:absolute;left:1742.6px;top:250.5px" width="30" height="24" viewBox="1742.6 250.5 30 24"><polyline points="1749.85,258.0 1757.6,266.0 1765.35,258.0" fill="none" stroke="#9a9a9a" stroke-width="4.2"/></svg>
<div style="position:absolute;left:1795.2px;top:256.8px;width:17.0px;height:4.599999999999966px;background:repeating-linear-gradient(90deg,#9a9a9a 0 4.3px,transparent 4.3px 6.3px)"></div>
<svg style="position:absolute;left:1838px;top:249px" width="22" height="22" viewBox="1838 249 22 22"><path d="M1843,254 L1854.5,265.5 M1854.5,254 L1843,265.5" stroke="#9a9a9a" stroke-width="3.6"/></svg>
<div style="position:absolute;left:498px;top:297px;width:191px;height:45px;border:1px solid #c6c6c6;border-radius:6px;box-sizing:border-box;background:linear-gradient(#ffffff,#e9e9e9);box-shadow:0 1px 2px rgba(0,0,0,.18)"></div>
<svg style="position:absolute;left:515px;top:306px" width="30" height="28" viewBox="515 306 30 28">
<circle cx="527.6" cy="318.6" r="6.3" fill="none" stroke="#1e1e1e" stroke-width="3.3"/>
<line x1="532.2" y1="323.3" x2="537.6" y2="328.6" stroke="#1e1e1e" stroke-width="3.6" stroke-linecap="round"/></svg>
<div style="position:absolute;left:482px;top:373px;width:173px;height:45px;border:1px solid #dcdcdc;border-radius:6px;box-sizing:border-box;background:linear-gradient(#fdfdfd,#f1f1f1);box-shadow:0 1px 2px rgba(0,0,0,.08)"></div>
<svg style="position:absolute;left:498px;top:381px" width="30" height="30" viewBox="498 381 30 30">
<g transform="translate(504.2,404.6) rotate(-45)" fill="#8d8d8d">
<polygon points="0,0 5.2,-3.6 5.2,3.6"/>
<rect x="6.1" y="-3.6" width="11.6" height="7.2"/>
<rect x="18.6" y="-3.6" width="4.2" height="7.2" rx="1"/>
</g>
<g transform="translate(504.2,404.6) rotate(-45)" fill="#f6f6f6">
<rect x="6.1" y="-1.8" width="11.6" height="1"/>
<circle cx="3.2" cy="-0.6" r="1.2"/>
</g></svg>
<div style="position:absolute;left:482px;top:755px;width:2006px;height:365px;background:#f9f9f9;border-left:1px solid #dedede;border-right:1px solid #dedede;box-sizing:border-box"></div>
<div style="position:absolute;left:482px;top:433px;width:2006px;height:47px;background:linear-gradient(#fbfbfb,#ebebeb);border:1px solid #d6d6d6;box-sizing:border-box"></div>
<div style="position:absolute;left:482px;top:479px;width:2006px;height:46px;background:#ffffff"></div>
<div style="position:absolute;left:482px;top:525px;width:2006px;height:46px;background:#f4f4f4"></div>
<div style="position:absolute;left:482px;top:571px;width:2006px;height:46px;background:#ffffff"></div>
<div style="position:absolute;left:482px;top:617px;width:2006px;height:46px;background:#f4f4f4"></div>
<div style="position:absolute;left:482px;top:663px;width:2006px;height:46px;background:#ffffff"></div>
<div style="position:absolute;left:482px;top:709px;width:2006px;height:46px;background:#f4f4f4"></div>
<div style="position:absolute;left:482px;top:479px;width:2006px;height:1px;background:#dedede"></div>
<div style="position:absolute;left:482px;top:525px;width:2006px;height:1px;background:#dedede"></div>
<div style="position:absolute;left:482px;top:571px;width:2006px;height:1px;background:#dedede"></div>
<div style="position:absolute;left:482px;top:617px;width:2006px;height:1px;background:#dedede"></div>
<div style="position:absolute;left:482px;top:663px;width:2006px;height:1px;background:#dedede"></div>
<div style="position:absolute;left:482px;top:709px;width:2006px;height:1px;background:#dedede"></div>
<div style="position:absolute;left:482px;top:755px;width:2006px;height:1px;background:#dedede"></div>
<div style="position:absolute;left:482px;top:433px;width:1px;height:322px;background:#d6d6d6"></div>
<div style="position:absolute;left:2487px;top:433px;width:1px;height:322px;background:#dedede"></div>
<div style="position:absolute;left:584px;top:434px;width:1px;height:321px;background:#dedede"></div>
<div style="position:absolute;left:791px;top:434px;width:1px;height:321px;background:#dedede"></div>
<div style="position:absolute;left:1004px;top:434px;width:1px;height:321px;background:#dedede"></div>
<div style="position:absolute;left:1580px;top:434px;width:1px;height:321px;background:#dedede"></div>
<div style="position:absolute;left:1781px;top:434px;width:1px;height:321px;background:#dedede"></div>
<div style="position:absolute;left:1957px;top:434px;width:1px;height:321px;background:#dedede"></div>
<div style="position:absolute;left:2141px;top:434px;width:1px;height:321px;background:#dedede"></div>
<div style="position:absolute;left:2378px;top:434px;width:1px;height:321px;background:#dedede"></div>
<svg style="position:absolute;left:975px;top:455px" width="16" height="12" viewBox="975 455 16 12"><polygon points="978,457.8 988.8,457.8 983.4,464" fill="#333"/></svg>
<div style="position:absolute;left:2457px;top:433px;width:31px;height:33px;background:linear-gradient(#fafafa,#efefef);border:1px solid #d6d6d6;box-sizing:border-box"></div>
<svg style="position:absolute;left:2461.8px;top:437.5px" width="22" height="22" viewBox="-11 -11 22 22">
<g fill="#444"><circle r="5.9"/>
<rect x="-1.6" y="-9" width="3.2" height="18" />
<rect x="-1.6" y="-9" width="3.2" height="18" transform="rotate(90)"/>
<rect x="-1.7" y="-8.3" width="3.4" height="16.6" transform="rotate(45)"/>
<rect x="-1.7" y="-8.3" width="3.4" height="16.6" transform="rotate(135)"/></g>
<circle r="3.1" fill="#f4f4f4"/></svg>
<svg style="position:absolute;left:498.8px;top:494px;overflow:visible" width="9.8" height="17" viewBox="498.8 494 9.8 17"><rect x="504.7" y="495" width="1.9" height="15" fill="#333333"/><line x1="505.09999999999997" y1="495.5" x2="500.8" y2="498.6" stroke="#333333" stroke-width="1.71"/></svg>
<div style="position:absolute;left:1025px;top:512px;width:373.4000000000001px;height:2px;background:#3eaddd"></div>
<div style="position:absolute;left:1025px;top:558px;width:525px;height:2px;background:#3eaddd"></div>
<div style="position:absolute;left:1025px;top:604px;width:513px;height:2px;background:#3eaddd"></div>
<svg style="position:absolute;left:498.8px;top:632px;overflow:visible" width="9.8" height="17" viewBox="498.8 632 9.8 17"><rect x="504.7" y="633" width="1.9" height="15" fill="#333333"/><line x1="505.09999999999997" y1="633.5" x2="500.8" y2="636.6" stroke="#333333" stroke-width="1.71"/></svg>
<div style="position:absolute;left:1025px;top:650px;width:243.29999999999995px;height:2px;background:#3eaddd"></div>
<svg style="position:absolute;left:498.8px;top:678px;overflow:visible" width="9.8" height="17" viewBox="498.8 678 9.8 17"><rect x="504.7" y="679" width="1.9" height="15" fill="#333333"/><line x1="505.09999999999997" y1="679.5" x2="500.8" y2="682.6" stroke="#333333" stroke-width="1.71"/></svg>
<div style="position:absolute;left:1025px;top:696px;width:231.20000000000005px;height:2px;background:#3eaddd"></div>
<svg style="position:absolute;left:498.8px;top:724px;overflow:visible" width="9.8" height="17" viewBox="498.8 724 9.8 17"><rect x="504.7" y="725" width="1.9" height="15" fill="#333333"/><line x1="505.09999999999997" y1="725.5" x2="500.8" y2="728.6" stroke="#333333" stroke-width="1.71"/></svg>
<div style="position:absolute;left:1025px;top:742px;width:231px;height:2px;background:#3eaddd"></div>
<svg style="position:absolute;left:1970px;top:493.4px" width="24" height="22" viewBox="1970 493.4 24 22"><rect x="1974.9" y="496.29999999999995" width="14.2" height="15.6" rx="2.6" fill="#fff" stroke="#3d3d3d" stroke-width="1.8"/></svg>
<svg style="position:absolute;left:1970px;top:539.6px" width="24" height="22" viewBox="1970 539.6 24 22"><rect x="1974.9" y="542.5" width="14.2" height="15.6" rx="2.6" fill="#fff" stroke="#3d3d3d" stroke-width="1.8"/></svg>
<svg style="position:absolute;left:1970px;top:581.3px" width="28" height="26" viewBox="1970 581.3 28 26"><path d="M1986.6,588.1999999999999 H1977.5 Q1974.9,588.1999999999999 1974.9,590.8 V601.1999999999999 Q1974.9,603.8 1977.5,603.8 H1986.5 Q1989.1,603.8 1989.1,601.1999999999999 V595.9" fill="none" stroke="#3d3d3d" stroke-width="1.8"/><polyline points="1977.8,593.5999999999999 1982.3,598.9 1992.6,589.1999999999999" fill="none" stroke="#3d3d3d" stroke-width="3.3"/></svg>
<svg style="position:absolute;left:1970px;top:631.4px" width="24" height="22" viewBox="1970 631.4 24 22"><rect x="1974.9" y="634.3" width="14.2" height="15.6" rx="2.6" fill="#fff" stroke="#3d3d3d" stroke-width="1.8"/></svg>
<svg style="position:absolute;left:1970px;top:677.5px" width="24" height="22" viewBox="1970 677.5 24 22"><rect x="1974.9" y="680.4" width="14.2" height="15.6" rx="2.6" fill="#fff" stroke="#3d3d3d" stroke-width="1.8"/></svg>
<svg style="position:absolute;left:1970px;top:723.6px" width="24" height="22" viewBox="1970 723.6 24 22"><rect x="1974.9" y="726.5" width="14.2" height="15.6" rx="2.6" fill="#fff" stroke="#3d3d3d" stroke-width="1.8"/></svg>
<div style="position:absolute;left:483px;top:480px;width:101px;height:45px;border:3px solid #48aedb;box-sizing:border-box"></div>
<span class="t" style="left:114.60px;top:125.00px;font-size:20.48px;line-height:20.48px;color:#adadad;font-weight:400;transform:scaleX(1.0325);transform-origin:0 17px;">Договор</span>
<span class="t" style="left:83.99px;top:202.00px;font-size:22.48px;line-height:22.48px;color:#a7a7a7;font-weight:400;transform:scaleX(1.0095);transform-origin:0 18px;">Папки приложения</span>
<span class="t" style="left:106.60px;top:269.00px;font-size:22.48px;line-height:22.48px;color:#a7a7a7;font-weight:400;transform:scaleX(0.9959);transform-origin:0 18px;">Документы</span>
<span class="t" style="left:104.03px;top:325.00px;font-size:22.48px;line-height:22.48px;color:#a7a7a7;font-weight:400;transform:scaleX(0.9695);transform-origin:0 18px;">Все документы</span>
<span class="t" style="left:104.00px;top:372.00px;font-size:22.48px;line-height:22.48px;color:#a7a7a7;font-weight:400;transform:scaleX(0.9977);transform-origin:0 18px;">Внутренние</span>
<span class="t" style="left:104.02px;top:418.00px;font-size:22.48px;line-height:22.48px;color:#a7a7a7;font-weight:400;transform:scaleX(0.9820);transform-origin:0 18px;">Входящие письма</span>
<span class="t" style="left:104.02px;top:464.00px;font-size:22.48px;line-height:22.48px;color:#a7a7a7;font-weight:400;transform:scaleX(0.9799);transform-origin:0 18px;">Исходящие письма</span>
<span class="t" style="left:106.60px;top:521.00px;font-size:22.48px;line-height:22.48px;color:#a7a7a7;font-weight:400;transform:scaleX(0.9867);transform-origin:0 18px;">Задачи</span>
<span class="t" style="left:106.60px;top:587.00px;font-size:22.48px;line-height:22.48px;color:#a7a7a7;font-weight:400;transform:scaleX(0.9915);transform-origin:0 18px;">Заказы/Ком.предложения</span>
<span class="t" style="left:106.60px;top:653.00px;font-size:22.48px;line-height:22.48px;color:#a7a7a7;font-weight:400;transform:scaleX(1.0186);transform-origin:0 18px;">Договоры</span>
<span class="t" style="left:105.66px;top:719.00px;font-size:22.48px;line-height:22.48px;color:#a7a7a7;font-weight:400;transform:scaleX(0.9419);transform-origin:0 18px;">Счета</span>
<span class="t" style="left:106.60px;top:785.00px;font-size:22.48px;line-height:22.48px;color:#a7a7a7;font-weight:400;transform:scaleX(0.9813);transform-origin:0 18px;">Авансовые отчеты</span>
<span class="t" style="left:105.59px;top:851.00px;font-size:22.48px;line-height:22.48px;color:#a7a7a7;font-weight:400;transform:scaleX(1.0147);transform-origin:0 18px;">Отгрузки/Акты</span>
<span class="t" style="left:83.97px;top:907.00px;font-size:22.48px;line-height:22.48px;color:#a7a7a7;font-weight:400;transform:scaleX(1.0260);transform-origin:0 18px;">Мои подборки</span>
<span class="t" style="left:84.04px;top:963.00px;font-size:22.48px;line-height:22.48px;color:#a7a7a7;font-weight:400;transform:scaleX(0.9647);transform-origin:0 18px;">Согласование</span>
<span class="t" style="left:58.83px;top:1019.00px;font-size:22.48px;line-height:22.48px;color:#a7a7a7;font-weight:400;transform:scaleX(0.9678);transform-origin:0 18px;">На согласование</span>
<span class="t" style="left:58.80px;top:1067.00px;font-size:22.48px;line-height:22.48px;color:#a7a7a7;font-weight:400;transform:scaleX(1.0002);transform-origin:0 18px;">Мои документы</span>
<span class="t" style="left:396.53px;top:367.00px;font-size:21.48px;line-height:21.48px;color:#3fb3e6;font-weight:400;transform:scaleX(1.0700);transform-origin:0 17px;">7</span>
<span class="t" style="left:396.80px;top:460.00px;font-size:21.62px;line-height:21.62px;color:#3fb3e6;font-weight:400;transform:scaleX(0.9167);transform-origin:0 18px;">3</span>
<span class="t" style="left:396.60px;top:1015.00px;font-size:21.62px;line-height:21.62px;color:#3fb3e6;font-weight:400;transform:scaleX(0.9083);transform-origin:0 18px;">0</span>
<span class="t" style="left:395.61px;top:1061.00px;font-size:21.62px;line-height:21.62px;color:#3fb3e6;font-weight:400;transform:scaleX(0.9909);transform-origin:0 18px;">6</span>
<span class="t" style="left:502.78px;top:36.00px;font-size:21.91px;line-height:21.91px;color:#8fc46a;font-weight:400;transform:scaleX(1.0179);transform-origin:0 18px;">Мои документы</span>
<span class="t" style="left:526.82px;top:88.00px;font-size:21.48px;line-height:21.48px;color:#333;font-weight:400;transform:scaleX(0.9764);transform-origin:0 17px;">Фильтр</span>
<span class="t" style="left:497.80px;top:129.00px;font-size:21.91px;line-height:21.91px;color:#333333;font-weight:400;transform:scaleX(1.0145);transform-origin:0 18px;">Только активные</span>
<span class="t" style="left:738.81px;top:129.00px;font-size:21.91px;line-height:21.91px;color:#333333;font-weight:400;transform:scaleX(0.9911);transform-origin:0 18px;">Имя процесса</span>
<span class="t" style="left:1278.01px;top:129.00px;font-size:21.91px;line-height:21.91px;color:#333333;font-weight:400;transform:scaleX(0.9918);transform-origin:0 18px;">Вид документа</span>
<span class="t" style="left:497.61px;top:189.00px;font-size:21.91px;line-height:21.91px;color:#333333;font-weight:400;transform:scaleX(0.9874);transform-origin:0 18px;">Время начала с</span>
<span class="t" style="left:968.93px;top:189.00px;font-size:21.91px;line-height:21.91px;color:#333333;font-weight:400;transform:scaleX(1.0720);transform-origin:0 18px;">по</span>
<span class="t" style="left:497.62px;top:249.00px;font-size:21.91px;line-height:21.91px;color:#333333;font-weight:400;transform:scaleX(0.9770);transform-origin:0 18px;">Срок с</span>
<span class="t" style="left:875.47px;top:249.00px;font-size:21.91px;line-height:21.91px;color:#333333;font-weight:400;transform:scaleX(1.0326);transform-origin:0 18px;">по</span>
<span class="t" style="left:1212.95px;top:249.00px;font-size:21.91px;line-height:21.91px;color:#333333;font-weight:400;transform:scaleX(1.0451);transform-origin:0 18px;">Инициатор</span>
<div style="position:absolute;left:1350px;top:240px;width:374.5999999999999px;height:40px;overflow:hidden"><div style="position:absolute;left:-1350px;top:-240px"><span class="t" style="left:1354.96px;top:250.00px;font-size:21.91px;line-height:21.91px;color:#333333;font-weight:400;transform:scaleX(1.0400);transform-origin:0 18px;">Самоделкин | Начальник производства</span></div></div>
<span class="t" style="left:548.67px;top:309.00px;font-size:21.91px;line-height:21.91px;color:#222;font-weight:400;transform:scaleX(1.0322);transform-origin:0 18px;">Применить</span>
<span class="t" style="left:531.27px;top:385.00px;font-size:21.91px;line-height:21.91px;color:#8e8e8e;font-weight:400;transform:scaleX(1.0263);transform-origin:0 18px;">Изменить</span>
<span class="t" style="left:2403.30px;top:385.00px;font-size:21.91px;line-height:21.91px;color:#333333;font-weight:400;transform:scaleX(0.9989);transform-origin:0 18px;">6 строк</span>
<span class="t" style="left:499.02px;top:447.00px;font-size:20.48px;line-height:20.48px;color:#333;font-weight:400;transform:scaleX(0.9838);transform-origin:0 17px;">Версия</span>
<span class="t" style="left:600.42px;top:447.00px;font-size:20.48px;line-height:20.48px;color:#333;font-weight:400;transform:scaleX(0.9766);transform-origin:0 17px;">Статус версии</span>
<span class="t" style="left:807.72px;top:447.00px;font-size:20.48px;line-height:20.48px;color:#333;font-weight:400;transform:scaleX(0.9792);transform-origin:0 17px;">Время начала</span>
<span class="t" style="left:1021.00px;top:447.00px;font-size:20.48px;line-height:20.48px;color:#333;font-weight:400;transform:scaleX(0.9975);transform-origin:0 17px;">Документ</span>
<span class="t" style="left:1597.03px;top:447.00px;font-size:20.48px;line-height:20.48px;color:#333;font-weight:400;transform:scaleX(0.9687);transform-origin:0 17px;">Статус документа</span>
<span class="t" style="left:1797.62px;top:447.00px;font-size:20.48px;line-height:20.48px;color:#333;font-weight:400;transform:scaleX(0.9850);transform-origin:0 17px;">Вид документа</span>
<span class="t" style="left:1973.68px;top:447.00px;font-size:20.48px;line-height:20.48px;color:#333;font-weight:400;transform:scaleX(1.0207);transform-origin:0 17px;">Приостановлен</span>
<span class="t" style="left:2157.19px;top:447.00px;font-size:20.48px;line-height:20.48px;color:#333;font-weight:400;transform:scaleX(1.0101);transform-origin:0 17px;">Комментарий запус...</span>
<div style="position:absolute;left:2380px;top:436px;width:77.5px;height:42px;overflow:hidden"><div style="position:absolute;left:-2380px;top:-436px"><span class="t" style="left:2393.89px;top:447.00px;font-size:20.48px;line-height:20.48px;color:#333;font-weight:400;transform:scaleX(1.1070);transform-origin:0 17px;">Комментарий</span></div></div>
<span class="t" style="left:600.79px;top:492.00px;font-size:21.76px;line-height:21.76px;color:#333333;font-weight:400;transform:scaleX(1.0101);transform-origin:0 18px;">На согласовании</span>
<span class="t" style="left:807.72px;top:492.00px;font-size:21.76px;line-height:21.76px;color:#333333;font-weight:400;transform:scaleX(0.9802);transform-origin:0 18px;">17.03.2023 15:08</span>
<span class="t" style="left:1024.60px;top:492.00px;font-size:21.76px;line-height:21.76px;color:#3eaddd;font-weight:400;transform:scaleX(0.9989);transform-origin:0 18px;">№ П-11 от 17.03.2023 Приказ &quot;Наша&quot;</span>
<span class="t" style="left:498.58px;top:538.00px;font-size:21.76px;line-height:21.76px;color:#333333;font-weight:400;transform:scaleX(1.0182);transform-origin:0 18px;">9</span>
<span class="t" style="left:600.79px;top:538.00px;font-size:21.76px;line-height:21.76px;color:#333333;font-weight:400;transform:scaleX(1.0101);transform-origin:0 18px;">На согласовании</span>
<span class="t" style="left:807.72px;top:538.00px;font-size:21.76px;line-height:21.76px;color:#333333;font-weight:400;transform:scaleX(0.9802);transform-origin:0 18px;">15.03.2023 12:34</span>
<span class="t" style="left:1024.60px;top:538.00px;font-size:21.76px;line-height:21.76px;color:#3eaddd;font-weight:400;transform:scaleX(1.0024);transform-origin:0 18px;">№ П/К-10 от 15.03.2023 Приказ (Конфиденциально)</span>
<span class="t" style="left:498.58px;top:584.00px;font-size:21.76px;line-height:21.76px;color:#333333;font-weight:400;transform:scaleX(1.0182);transform-origin:0 18px;">9</span>
<span class="t" style="left:600.79px;top:584.00px;font-size:21.76px;line-height:21.76px;color:#333333;font-weight:400;transform:scaleX(1.0101);transform-origin:0 18px;">На согласовании</span>
<span class="t" style="left:807.72px;top:584.00px;font-size:21.76px;line-height:21.76px;color:#333333;font-weight:400;transform:scaleX(0.9802);transform-origin:0 18px;">13.03.2023 12:49</span>
<span class="t" style="left:1024.59px;top:584.00px;font-size:21.76px;line-height:21.76px;color:#3eaddd;font-weight:400;transform:scaleX(1.0026);transform-origin:0 18px;">№ П/К-8 от 07.03.2023 Приказ (Конфиденциально)</span>
<span class="t" style="left:600.79px;top:630.00px;font-size:21.76px;line-height:21.76px;color:#333333;font-weight:400;transform:scaleX(1.0101);transform-origin:0 18px;">На согласовании</span>
<span class="t" style="left:808.70px;top:630.00px;font-size:21.76px;line-height:21.76px;color:#333333;font-weight:400;transform:scaleX(0.9744);transform-origin:0 18px;">09.02.2023 22:33</span>
<span class="t" style="left:1025.62px;top:630.00px;font-size:21.76px;line-height:21.76px;color:#3eaddd;font-weight:400;transform:scaleX(0.9803);transform-origin:0 18px;">Пр-123 09.02.2023 22:31</span>
<span class="t" style="left:600.79px;top:676.00px;font-size:21.76px;line-height:21.76px;color:#333333;font-weight:400;transform:scaleX(1.0101);transform-origin:0 18px;">На согласовании</span>
<span class="t" style="left:808.70px;top:676.00px;font-size:21.76px;line-height:21.76px;color:#333333;font-weight:400;transform:scaleX(0.9744);transform-origin:0 18px;">09.02.2023 22:03</span>
<span class="t" style="left:1025.62px;top:676.00px;font-size:21.76px;line-height:21.76px;color:#3eaddd;font-weight:400;transform:scaleX(0.9793);transform-origin:0 18px;">Пр-23 09.02.2023 21:55</span>
<span class="t" style="left:600.79px;top:722.00px;font-size:21.76px;line-height:21.76px;color:#333333;font-weight:400;transform:scaleX(1.0101);transform-origin:0 18px;">На согласовании</span>
<span class="t" style="left:808.70px;top:722.00px;font-size:21.76px;line-height:21.76px;color:#333333;font-weight:400;transform:scaleX(0.9802);transform-origin:0 18px;">09.02.2023 21:52</span>
<span class="t" style="left:1025.62px;top:722.00px;font-size:21.76px;line-height:21.76px;color:#3eaddd;font-weight:400;transform:scaleX(0.9784);transform-origin:0 18px;">Пр-45 09.02.2023 17:41</span>
<span class="t" style="left:1597.79px;top:495.00px;font-size:21.76px;line-height:21.76px;color:#333333;font-weight:400;transform:scaleX(1.0101);transform-origin:0 18px;">На согласовании</span>
<span class="t" style="left:1597.79px;top:537.00px;font-size:21.76px;line-height:21.76px;color:#333333;font-weight:400;transform:scaleX(1.0101);transform-origin:0 18px;">На согласовании</span>
<span class="t" style="left:1597.29px;top:583.00px;font-size:21.76px;line-height:21.76px;color:#333333;font-weight:400;transform:scaleX(1.0101);transform-origin:0 18px;">На согласовании</span>
<span class="t" style="left:1596.29px;top:629.00px;font-size:21.76px;line-height:21.76px;color:#333333;font-weight:400;transform:scaleX(1.0101);transform-origin:0 18px;">На согласовании</span>
<span class="t" style="left:1596.69px;top:677.00px;font-size:21.76px;line-height:21.76px;color:#333333;font-weight:400;transform:scaleX(1.0101);transform-origin:0 18px;">На согласовании</span>
<span class="t" style="left:1596.69px;top:720.00px;font-size:21.76px;line-height:21.76px;color:#333333;font-weight:400;transform:scaleX(1.0101);transform-origin:0 18px;">На согласовании</span>
<span class="t" style="left:1797.50px;top:492.00px;font-size:21.76px;line-height:21.76px;color:#333333;font-weight:400;transform:scaleX(1.0136);transform-origin:0 18px;">Документы</span>
<span class="t" style="left:1797.50px;top:538.00px;font-size:21.76px;line-height:21.76px;color:#333333;font-weight:400;transform:scaleX(1.0136);transform-origin:0 18px;">Документы</span>
<span class="t" style="left:1797.80px;top:584.00px;font-size:21.76px;line-height:21.76px;color:#333333;font-weight:400;transform:scaleX(1.0136);transform-origin:0 18px;">Документы</span>
<span class="t" style="left:1801.40px;top:629.00px;font-size:21.76px;line-height:21.76px;color:#333333;font-weight:400;transform:scaleX(1.0136);transform-origin:0 18px;">Документы</span>
<span class="t" style="left:1801.40px;top:676.00px;font-size:21.76px;line-height:21.76px;color:#333333;font-weight:400;transform:scaleX(1.0136);transform-origin:0 18px;">Документы</span>
<span class="t" style="left:1801.40px;top:722.00px;font-size:21.76px;line-height:21.76px;color:#333333;font-weight:400;transform:scaleX(1.0136);transform-origin:0 18px;">Документы</span>
<span class="t" style="left:2157.19px;top:492.00px;font-size:21.76px;line-height:21.76px;color:#4a4a4a;font-weight:400;transform:scaleX(1.0125);transform-origin:0 18px;">Новая редакция п...</span>
<span class="t" style="left:2158.51px;top:535.00px;font-size:20.34px;line-height:20.34px;color:#4a4a4a;font-weight:400;transform:scaleX(0.9922);transform-origin:0 17px;">Приказ о......</span>
<span class="t" style="left:2159.20px;top:583.00px;font-size:20.34px;line-height:20.34px;color:#4a4a4a;font-weight:400;transform:scaleX(0.9805);transform-origin:0 17px;">О направлении в коман</span>
<span class="t" style="left:2158.51px;top:628.00px;font-size:20.34px;line-height:20.34px;color:#4a4a4a;font-weight:400;transform:scaleX(0.9865);transform-origin:0 17px;">Приказ для согласован</span>
<span class="t" style="left:2159.51px;top:674.00px;font-size:20.34px;line-height:20.34px;color:#4a4a4a;font-weight:400;transform:scaleX(0.9865);transform-origin:0 17px;">Приказ для согласован</span>
<span class="t" style="left:2157.31px;top:719.00px;font-size:20.34px;line-height:20.34px;color:#4a4a4a;font-weight:400;transform:scaleX(0.9871);transform-origin:0 17px;">На предварительное  с</span>
<svg style="position:absolute;left:0;top:0;overflow:visible" width="2514" height="1127" viewBox="0 0 2514 1127"><defs><filter id="sh" x="-10%" y="-10%" width="130%" height="130%"><feDropShadow dx="2.5" dy="2.5" stdDeviation="2" flood-color="#000" flood-opacity="0.55"/></filter></defs><g filter="url(#sh)"><rect x="490.1" y="116.1" width="232.79999999999995" height="41.400000000000006" fill="none" stroke="#ff0000" stroke-width="2.2"/><rect x="1207.5" y="226.8" width="672.4000000000001" height="72.59999999999997" fill="none" stroke="#ff0000" stroke-width="2.2"/><rect x="372.5" y="1050.8" width="58.89999999999998" height="44.600000000000136" fill="none" stroke="#ff0000" stroke-width="2.2"/><path d="M1721,648.1 L2014.7,648.1 L1983.6,613.5 L2038.5,648.1 L2110.9,648.1 L2110.9,763.1 L1721,763.1 Z" fill="#ffffc8" stroke="#ff0000" stroke-width="3.2" stroke-linejoin="miter" stroke-miterlimit="3"/><path d="M1204.45,792.5 L1278.6,792.5 L1212.6,746.5 L1322,792.5 L1579,792.5 L1579,901.3 L1204.45,901.3 Z" fill="#ffffc8" stroke="#ff0000" stroke-width="3.2" stroke-linejoin="miter" stroke-miterlimit="3"/><path d="M535,849.5 L853.1,849.5 L853.1,999.8 L535,999.8 L535,971.6 L432.5,1048.8 L535,954.2 Z" fill="#ffffc8" stroke="#ff0000" stroke-width="3.2" stroke-linejoin="miter" stroke-miterlimit="3"/></g></svg>
<svg style="position:absolute;left:590px;top:500px;overflow:visible;filter:drop-shadow(1.5px 2px 1.5px rgba(0,0,0,.45))" width="30" height="32" viewBox="590 500 30 32">
<path d="M600.2,516 L600.2,506.8 Q600.2,505.1 601.8,505.1 Q603.4,505.1 603.4,506.8 L603.4,510.3 Q606,510.4 606.5,511.4 Q609,511.6 609.5,512.7 Q612.7,513.3 612.7,516 L612.7,520 L610.6,526.2 L601.8,526.2 L596.4,516.8 Q595.6,514.3 597.8,514.1 Q599.2,514.3 600.2,516 Z" fill="#fff" stroke="#0a0a14" stroke-width="1.3" stroke-linejoin="round"/>
<path d="M603.4,510.3 V514.6 M606.5,511.4 V514.6 M609.5,512.7 V515.6" stroke="#0a0a14" stroke-width="1.1"/></svg>
<span class="t" style="left:1747.00px;top:682.00px;font-size:23.47px;line-height:23.47px;color:#000;font-weight:700;transform:scaleX(1.0000);transform-origin:0 19px;letter-spacing:-0.194px;">Процесс был приостановлен</span>
<span class="t" style="left:1838.00px;top:709.00px;font-size:23.47px;line-height:23.47px;color:#000;font-weight:700;transform:scaleX(1.0000);transform-origin:0 19px;letter-spacing:-0.322px;">инициатором</span>
<span class="t" style="left:1256.00px;top:810.00px;font-size:22.76px;line-height:22.76px;color:#000;font-weight:700;transform:scaleX(1.0000);transform-origin:0 19px;letter-spacing:0.228px;">Ссылка для перехода к</span>
<span class="t" style="left:1257.50px;top:837.00px;font-size:22.76px;line-height:22.76px;color:#000;font-weight:700;transform:scaleX(1.0000);transform-origin:0 19px;letter-spacing:0.260px;">карточке согласуемого</span>
<span class="t" style="left:1331.20px;top:864.00px;font-size:22.76px;line-height:22.76px;color:#000;font-weight:700;transform:scaleX(1.0000);transform-origin:0 19px;letter-spacing:-0.168px;">документа</span>
<span class="t" style="left:561.70px;top:887.00px;font-size:23.47px;line-height:23.47px;color:#000;font-weight:700;transform:scaleX(1.0000);transform-origin:0 19px;letter-spacing:-0.231px;">Индикатор количества</span>
<span class="t" style="left:573.90px;top:914.00px;font-size:23.47px;line-height:23.47px;color:#000;font-weight:700;transform:scaleX(1.0000);transform-origin:0 19px;letter-spacing:-0.358px;">активных процессов</span>
<span class="t" style="left:611.20px;top:941.00px;font-size:23.47px;line-height:23.47px;color:#000;font-weight:700;transform:scaleX(1.0000);transform-origin:0 19px;letter-spacing:-0.241px;">согласования.</span>
</div></div>
</body></html>
